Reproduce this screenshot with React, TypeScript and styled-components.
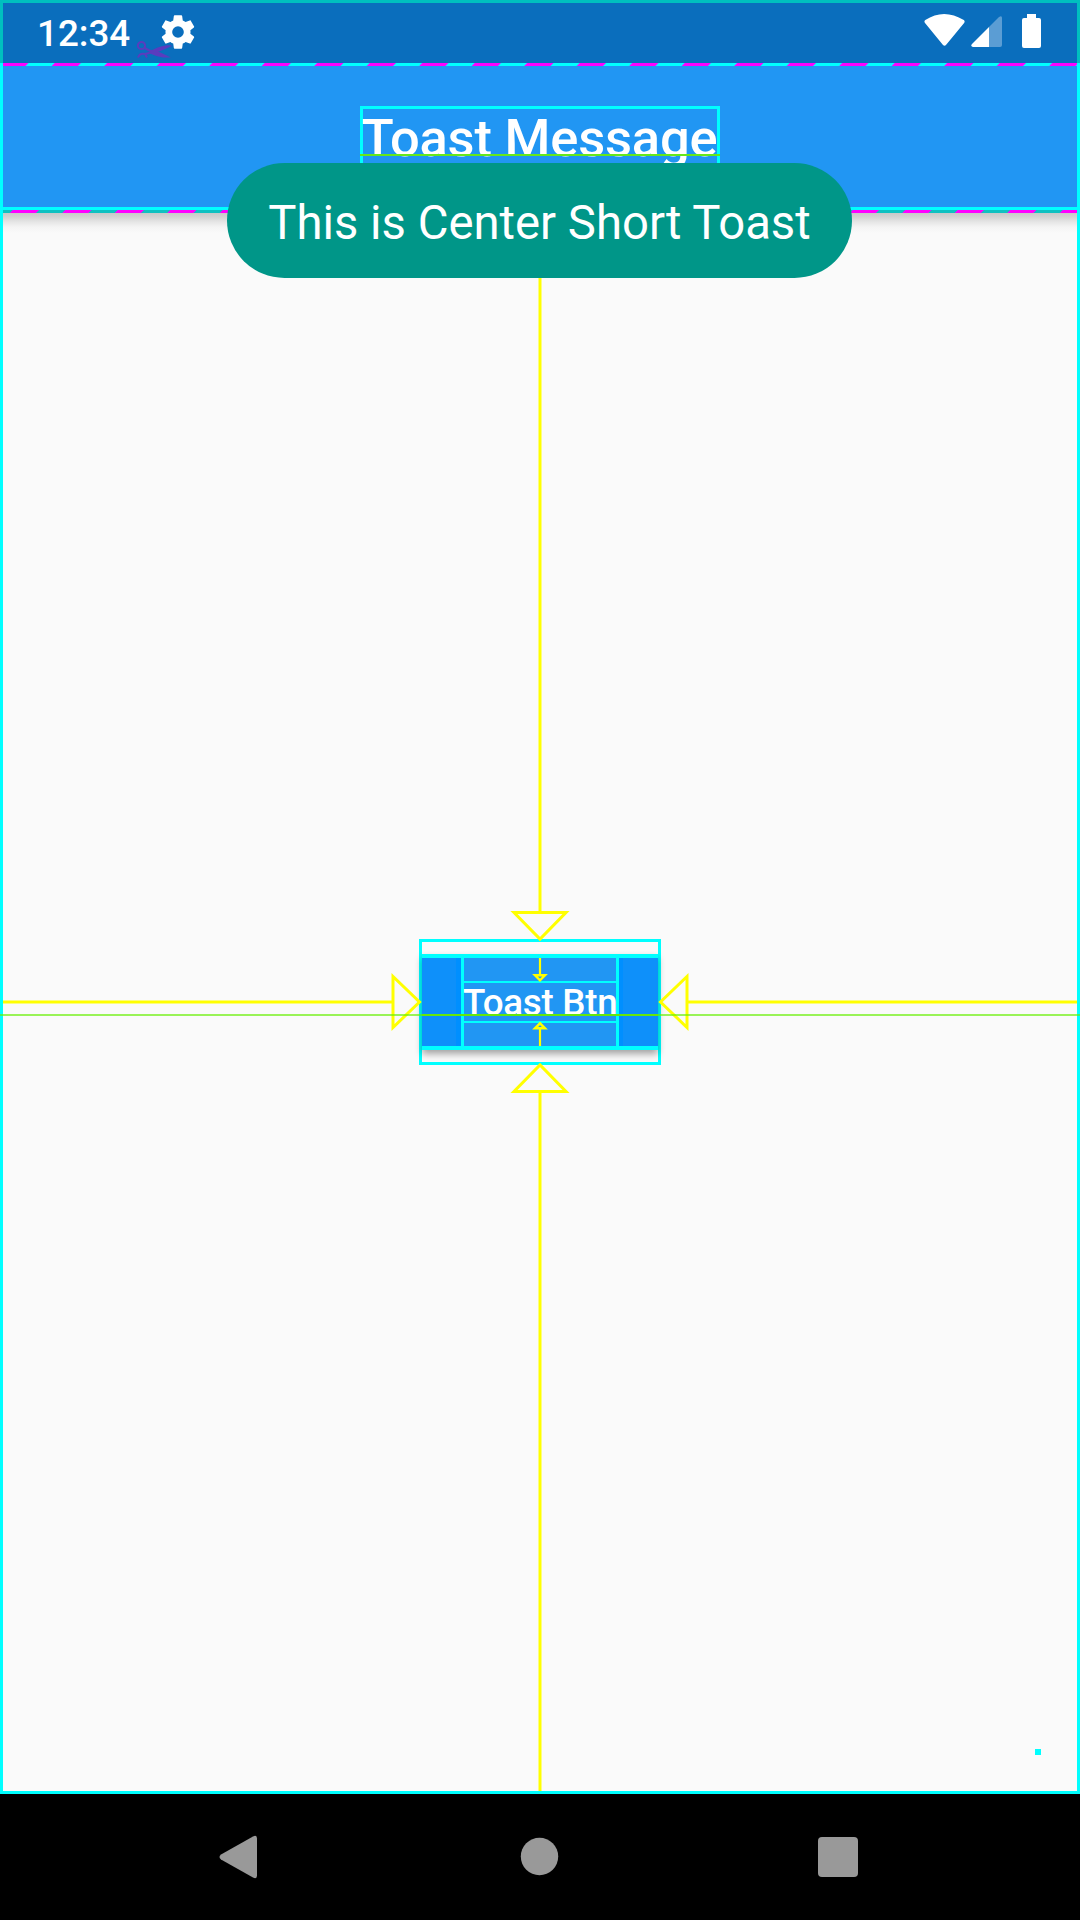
import React from "react";
import styled, { createGlobalStyle } from "styled-components";

const CYAN = "#00ffff";
const YELLOW = "#ffff00";

const GlobalStyle = createGlobalStyle`
  * { box-sizing: border-box; }
  body { margin: 0; background: #000; }
`;

const Screen = styled.div`
  position: relative;
  width: 1080px;
  height: 1920px;
  display: flex;
  flex-direction: column;
  overflow: hidden;
  background: #fafafa;
  font-family: Roboto, "Liberation Sans", sans-serif;
`;

const StatusBar = styled.header`
  height: 63px;
  flex: none;
  display: flex;
  align-items: center;
  background: #0a6ebd;
`;

const Clock = styled.span`
  width: 95px;
  margin-left: 37px;
  padding-top: 4px;
  color: #fff;
  font-size: 36.75px;
  font-weight: 500;
  line-height: 44px;
  white-space: nowrap;
`;

const StatusIcons = styled.svg`
  margin-left: auto;
  margin-right: 36px;
`;

const GearIcon = styled.svg`
  margin-left: 26px;
`;

const AppBar = styled.div`
  height: 147px;
  flex: none;
  display: flex;
  justify-content: center;
  align-items: flex-start;
  padding-top: 43px;
  background: #2196f3;
`;

const Title = styled.h1`
  margin: 0;
  width: 360px;
  height: 66px;
  border: 3px solid ${CYAN};
  color: #fff;
  font-size: 52.5px;
  font-weight: 500;
  letter-spacing: -0.2px;
  line-height: 59px;
  text-indent: -1.3px;
  white-space: nowrap;
`;

const Body = styled.main`
  flex: 1;
  display: flex;
  justify-content: center;
  align-items: center;
  background: linear-gradient(#c9c9c9 3px, #d3d3d3 7px, #e6e6e6 12px, #f4f4f4 17px, #fafafa 23px);
`;

const ButtonBounds = styled.div`
  width: 242px;
  height: 126px;
  padding: 12px 0;
  border: 3px solid ${CYAN};
`;

const ToastButton = styled.button`
  display: flex;
  justify-content: center;
  width: 100%;
  height: 96px;
  padding: 0;
  border: 0 solid ${CYAN};
  border-width: 4px 0;
  background: linear-gradient(
    90deg,
    #0e90fa 34px, #008fff 34px 40px,
    #2196f3 40px 196px,
    #008fff 196px 201px, #0e90fa 201px
  );
  box-shadow: 0 4px 7px rgba(0, 0, 0, 0.35);
  color: #fff;
  font-family: inherit;
`;

const LabelColumn = styled.span`
  display: flex;
  align-items: center;
  width: 158px;
  height: 88px;
  border: 0 solid ${CYAN};
  border-width: 0 3px 0 3px;
`;

const ButtonLabel = styled.span`
  flex: 1;
  height: 42px;
  border: 0 solid ${CYAN};
  border-width: 2px 0;
  font-size: 36.75px;
  font-weight: 500;
  letter-spacing: -0.25px;
  line-height: 40px;
  text-align: left;
  text-indent: -1px;
  white-space: nowrap;
`;

const NavBar = styled.nav`
  height: 126px;
  flex: none;
  display: flex;
  background: #000;
`;

const Toast = styled.div`
  position: absolute;
  left: 227px;
  top: 163px;
  width: 625px;
  height: 115px;
  display: flex;
  justify-content: center;
  align-items: center;
  padding-top: 5px;
  border-radius: 58px;
  background: #009688;
  color: #fff;
  font-size: 47.25px;
  line-height: 56px;
  white-space: nowrap;
`;

const Guides = styled.svg`
  position: absolute;
  inset: 0;
  pointer-events: none;
`;

function ClipDashes({ y, start }: { y: number; start: number }) {
  return (
    <g fill="#ff00ff">
      {Array.from({ length: 22 }, (_, i) => {
        const x = start + (i - 1) * 52.5;
        return <path key={i} d={`M${x} ${y}h26.3l-3 3h-26.3z`} />;
      })}
    </g>
  );
}

function Scissors() {
  return (
    <g fill="none" stroke="#5a3cbe" strokeWidth="2">
      <circle cx="141.500" cy="45.500" r="3.600" />
      <path d="M138 57.500q2-5 7-3.500l2 3.500M144.500 48l8 4M145 54l8-2" />
      <path fill="#5a3cbe" stroke="none" d="M149 52q7-5 18-6.700 4-.5 5 .7l-18 7.700zM151 50l6 1 14 6.500h-8q-7-1-13-4z" />
    </g>
  );
}

function LayoutGuides() {
  return (
    <Guides width="1080" height="1920" viewBox="0 0 1080 1920">
      <Scissors />
      <path fill={CYAN} d="M0 63h1080v3H0zM0 207h1080v3H0z" />
      <path fill="#0fc1c1" d="M3 210h1074v3H3z" />
      <ClipDashes y={63} start={2.2} />
      <ClipDashes y={210} start={12.7} />
      <path fill="#00bfbf" d="M0 0h1080v63h-3V3H3v60H0z" />
      <path fill={CYAN} d="M0 63h3v1728h1074V63h3v1731H0zM1035 1749h6v6h-6z" />
      <path fill="#66e71a" d="M360 154h360v2H360z" />
      <g fill="none" stroke={YELLOW} strokeWidth="3">
        <path d="M540 278V912M540 1092V1791M3 1002H392M688 1002H1077" />
        <path d="M514 912.500h52L540 939zM514 1091.500h52L540 1065zM393 976.500v51L419.500 1002zM687 976.500v51L660.500 1002z" />
        <path strokeWidth="2.200" d="M540 958v17M540 1046v-17" />
        <path strokeWidth="2.400" d="M535 975.300h10l-5 5zM535 1028.300h10l-5-5z" />
      </g>
      <path fill="#66f000" fillOpacity=".65" d="M0 1014h1080v2H0z" />
      <path fill="#66e60a" d="M422 1014h236v2H422z" />
    </Guides>
  );
}

export default function App() {
  return (
    <>
      <GlobalStyle />
      <Screen>
        <StatusBar>
          <Clock>12:34</Clock>
          <GearIcon width="40" height="40" viewBox="0 0 24 24" fill="#fff">
            <path d="M19.430 12.980c.04-.32.07-.64.07-.98s-.03-.66-.07-.98l2.110-1.650c.19-.15.24-.42.12-.64l-2-3.460c-.12-.22-.39-.3-.61-.22l-2.490 1c-.52-.4-1.080-.73-1.690-.98l-.38-2.650C14.460 2.180 14.250 2 14 2h-4c-.25 0-.46.18-.49.42l-.38 2.650c-.61.25-1.170.59-1.690.98l-2.490-1c-.23-.09-.49 0-.61.22l-2 3.460c-.13.22-.07.49.12.64l2.110 1.650c-.04.32-.07.65-.07.98s.03.66.07.98l-2.110 1.650c-.19.15-.24.42-.12.64l2 3.460c.12.22.39.3.61.22l2.490-1c.52.4 1.080.73 1.690.98l.38 2.650c.03.24.24.42.49.42h4c.25 0 .46-.18.49-.42l.38-2.650c.61-.25 1.170-.59 1.690-.98l2.490 1c.23.09.49 0 .61-.22l2-3.460c.12-.22.07-.49-.12-.64zM12 15.500A3.500 3.500 0 1 1 12 8.500a3.500 3.500 0 0 1 0 7z" />
          </GearIcon>
          <StatusIcons width="120" height="63" viewBox="924 0 120 63" fill="#fff">
            <path d="M925.300 20q18.500-12 38.500 0 1.500 1 .3 3L946 45q-1.500 1.500-3 0L925 23q-1.300-2 .3-3z" />
            <path fill="#5b9dd4" d="M989 27l10-10q3-2 3 1v27q0 2-2 2h-11z" />
            <path d="M989 27v20h-16q-3-1-1-3z" />
            <path d="M1027 14h9v4h3q2 0 2 2v26q0 2-2 2h-15q-2 0-2-2V20q0-2 2-2h3z" />
          </StatusIcons>
        </StatusBar>
        <AppBar>
          <Title>Toast Message</Title>
        </AppBar>
        <Body>
          <ButtonBounds>
            <ToastButton>
              <LabelColumn>
                <ButtonLabel>Toast Btn</ButtonLabel>
              </LabelColumn>
            </ToastButton>
          </ButtonBounds>
        </Body>
        <NavBar>
          <svg width="1080" height="126" viewBox="0 1794 1080 126" fill="#999">
            <path d="M221 1854.500l32-18q4-2 4 2v37q0 4-4 2l-32-18q-3-2.500 0-5z" />
            <circle cx="539.500" cy="1856.500" r="18.700" />
            <rect x="818" y="1837" width="40" height="40" rx="4" />
          </svg>
        </NavBar>
        <LayoutGuides />
        <Toast>This is Center Short Toast</Toast>
      </Screen>
    </>
  );
}
